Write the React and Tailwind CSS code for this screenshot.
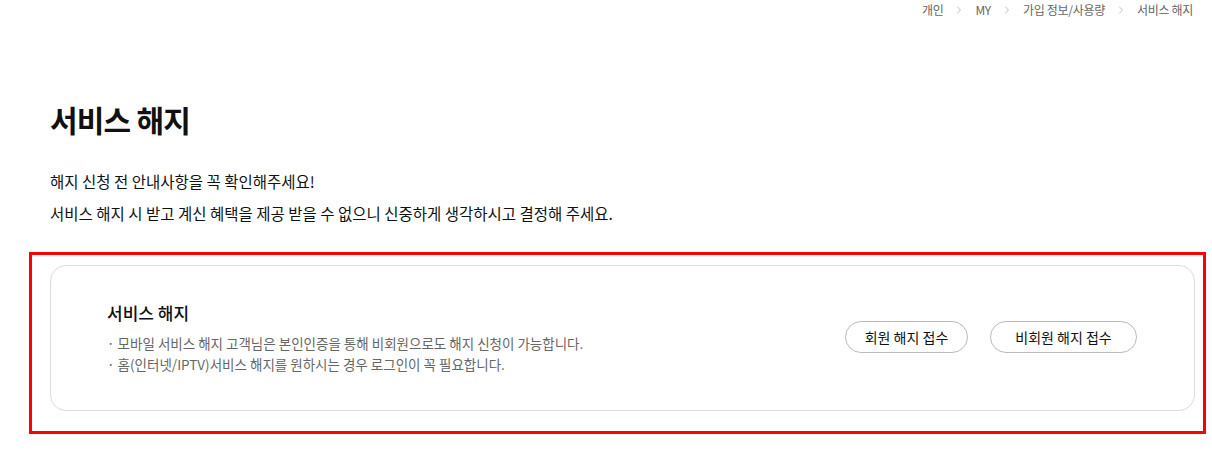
import { ChevronRight } from "lucide-react";

const crumbs = ["개인", "MY", "가입 정보/사용량", "서비스 해지"];

const Breadcrumb = () => (
  <div className="flex justify-end items-center pr-[19px] h-[20px] text-[12px] text-[#666]">
    {crumbs.map((c, i) => (
      <div key={c} className="flex items-center">
        {i > 0 && (
          <ChevronRight className="w-[12px] h-[12px] mx-[10px] text-[#aaa]" strokeWidth={1.5} />
        )}
        <span className="tracking-[-0.3px]">{c}</span>
      </div>
    ))}
  </div>
);

export default function App() {
  return (
    <div
      className="w-[1212px] h-[468px] bg-white text-[#111] overflow-hidden"
      style={{ fontFamily: '"Noto Sans CJK KR", "Noto Sans", sans-serif' }}
    >
      <Breadcrumb />

      {/* Page title */}
      <h1 className="ml-[50px] mt-[79px] text-[30px] leading-[40px] font-semibold tracking-[-0.8px] text-[#111]">
        서비스 해지
      </h1>

      {/* Notice */}
      <div className="ml-[50px] mt-[31px] flex flex-col gap-[10px] text-[15.5px] leading-[22px] text-[#111]">
        <p>해지 신청 전 안내사항을 꼭 확인해주세요!</p>
        <p>서비스 해지 시 받고 계신 혜택을 제공 받을 수 없으니 신중하게 생각하시고 결정해 주세요.</p>
      </div>

      {/* Highlighted section */}
      <div className="ml-[29px] mt-[28px] w-[1177px] border-[3px] border-[#ff0000] pl-[18px] pr-[8px] pt-[10px] pb-[20px]">
        <div className="h-[146px] rounded-[16px] border border-[#dddddd] flex items-start pt-[35px] pl-[56px] pr-[57px]">
          <div className="flex-1">
            <h2 className="text-[17px] leading-[24px] font-medium text-[#111]">
              서비스 해지
            </h2>
            <ul className="mt-[8px] text-[13.5px] leading-[21px] text-[#666]">
              <li>· 모바일 서비스 해지 고객님은 본인인증을 통해 비회원으로도 해지 신청이 가능합니다.</li>
              <li>· 홈(인터넷/IPTV)서비스 해지를 원하시는 경우 로그인이 꼭 필요합니다.</li>
            </ul>
          </div>
          <div className="flex items-center gap-[22px] mt-[20px]">
            <button className="w-[123px] h-[32px] rounded-full border border-[#bbbbbb] bg-white text-[14px] text-[#111]">
              회원 해지 접수
            </button>
            <button className="w-[147px] h-[32px] rounded-full border border-[#bbbbbb] bg-white text-[14px] text-[#111]">
              비회원 해지 접수
            </button>
          </div>
        </div>
      </div>
    </div>
  );
}
